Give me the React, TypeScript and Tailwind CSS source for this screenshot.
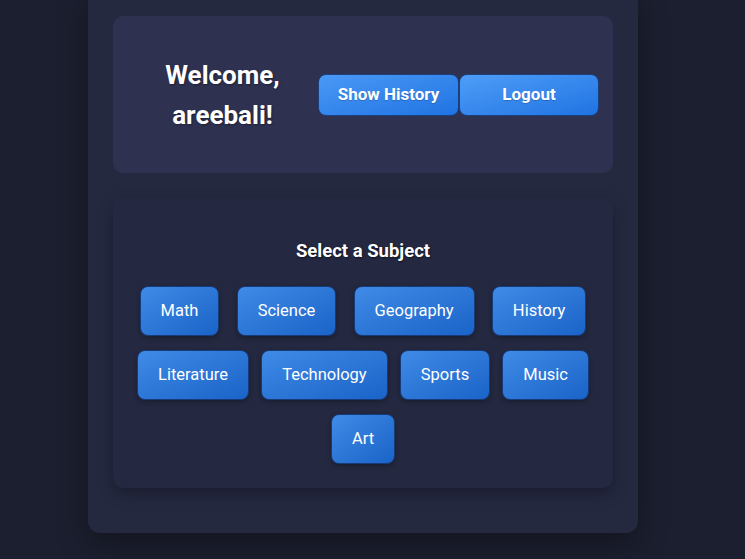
import React from "react";

const subjects = ["Math", "Science", "Geography", "History", "Literature", "Technology", "Sports", "Music", "Art"];

export default function App() {
  return (
    <div
      className="h-[559px] w-full overflow-hidden bg-[#1c1f2f] flex flex-col items-center justify-end pb-[26px] pr-[19px]"
      style={{ fontFamily: "Roboto, 'Noto Sans', sans-serif" }}
    >
      <div className="w-[550px] shrink-0 rounded-[12px] bg-[#252940] px-[25px] pt-[25px] pb-[45px] shadow-[0_10px_30px_rgba(0,0,0,0.35)]">
        <div className="h-[157px] rounded-[10px] bg-[#2e3150] flex items-center px-[14px]">
          <h2 className="flex-1 text-center text-[26px] font-bold leading-[40px] text-white [text-shadow:1px_1px_2px_rgba(0,0,0,0.35)]">
            Welcome,
            <br />
            areebali!
          </h2>
          <div className="flex">
            <button className="w-[141px] h-[42px] rounded-[8px] border border-[#1d3f7c] bg-gradient-to-br from-[#4a99f6] to-[#1f73e2] text-[17px] font-bold text-white [text-shadow:0_1px_1px_rgba(0,0,0,0.2)]">
              Show History
            </button>
            <button className="w-[140px] h-[42px] rounded-[8px] border border-[#1d3f7c] bg-gradient-to-br from-[#4e9df8] to-[#1f73e2] text-[17px] font-bold text-white [text-shadow:0_1px_1px_rgba(0,0,0,0.2)]">
              Logout
            </button>
          </div>
        </div>
        <div className="mt-[25px] rounded-[10px] bg-[#242840] px-[18px] pt-[40px] pb-[24px] shadow-[0_6px_16px_rgba(0,0,0,0.3)]">
          <h3 className="text-center text-[18.5px] font-bold leading-[27px] text-white [text-shadow:1px_1px_2px_rgba(0,0,0,0.5)]">
            Select a Subject
          </h3>
          <div className="mt-[21px] flex flex-wrap justify-around gap-y-[14px]">
            {subjects.map((s) => (
              <button
                key={s}
                className="mx-[5px] h-[50px] rounded-[8px] border border-[#173a78] bg-gradient-to-br from-[#3f8be6] to-[#1a63c8] px-[20px] text-[16.5px] text-white shadow-[0_2px_5px_rgba(0,0,0,0.25)]"
              >
                {s}
              </button>
            ))}
          </div>
        </div>
      </div>
    </div>
  );
}
